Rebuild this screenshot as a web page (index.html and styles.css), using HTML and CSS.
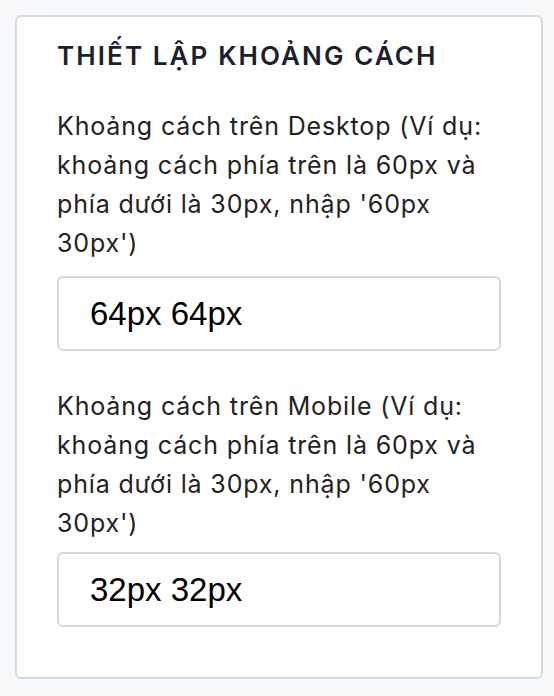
FILE: index.html
```html
<!DOCTYPE html>
<html lang="vi">
<head>
<meta charset="utf-8">
<title>Thiết lập khoảng cách</title>
<link rel="stylesheet" href="styles.css">
</head>
<body>
<section class="card">
  <h2 class="card-title">THIẾT LẬP KHOẢNG CÁCH</h2>
  <div class="field">
    <label class="field-label" for="desktop">Khoảng cách trên Desktop (Ví dụ: khoảng cách phía trên là 60px và phía dưới là 30px, nhập '60px 30px')</label>
    <input class="field-input" id="desktop" type="text" value="64px 64px">
  </div>
  <div class="field">
    <label class="field-label" for="mobile">Khoảng cách trên Mobile (Ví dụ: khoảng cách phía trên là 60px và phía dưới là 30px, nhập '60px 30px')</label>
    <input class="field-input" id="mobile" type="text" value="32px 32px">
  </div>
</section>
</body>
</html>
```

FILE: styles.css
```css
html, body {
  margin: 0;
  padding: 0;
  background: #f7f9fb;
}
body {
  font-family: Inter, "Liberation Sans", Arial, sans-serif;
  padding: 15px 11px 0 15px;
}
.card {
  background: #ffffff;
  border: 2px solid #d0dae2;
  border-radius: 6px;
  padding: 23px 40px 49px 40px;
  height: 664px;
  box-sizing: border-box;
}
.card-title {
  margin: 0;
  font-size: 26px;
  line-height: 32px;
  font-weight: 600;
  letter-spacing: 2.1px;
  color: #1a202c;
}
.field {
  display: flex;
  flex-direction: column;
  margin-top: 35px;
}
.field + .field {
  margin-top: 36px;
}
.field-label {
  font-size: 25px;
  line-height: 39px;
  letter-spacing: 0.85px;
  color: #222222;
  margin-bottom: 13px;
}
.field + .field .field-label {
  margin-bottom: 9px;
}
.field-input {
  box-sizing: border-box;
  width: 100%;
  height: 75px;
  margin: 0;
  padding: 0 31px;
  border: 2px solid #d0dae2;
  border-radius: 6px;
  background: #ffffff;
  font-family: "Liberation Sans", Arial, Helvetica, sans-serif;
  font-size: 33px;
  color: #000000;
  outline: none;
}
```
